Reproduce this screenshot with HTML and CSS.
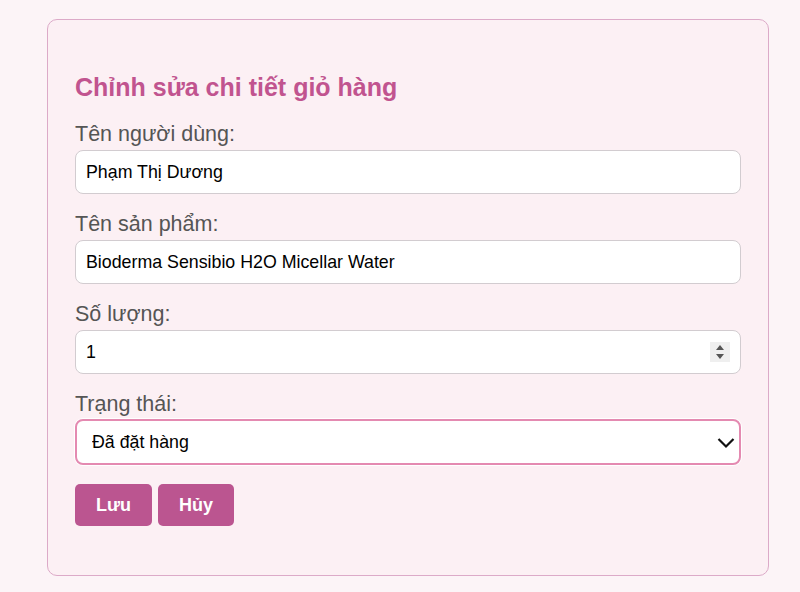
FILE: index.html
```html
<!DOCTYPE html>
<html lang="vi">
<head>
<meta charset="utf-8">
<title>Chỉnh sửa chi tiết giỏ hàng</title>
<link rel="stylesheet" href="styles.css">
</head>
<body>
<div class="card">
  <h2 class="title">Chỉnh sửa chi tiết giỏ hàng</h2>
  <form class="form">
    <label class="label" for="user">Tên người dùng:</label>
    <input class="field" id="user" type="text" value="Phạm Thị Dương">

    <label class="label" for="product">Tên sản phẩm:</label>
    <input class="field" id="product" type="text" value="Bioderma Sensibio H2O Micellar Water">

    <label class="label" for="qty">Số lượng:</label>
    <div class="wrap">
      <input class="field field-num" id="qty" type="number" value="1">
      <span class="spin">
        <svg width="20" height="20" viewBox="0 0 20 20"><path d="M10 3 L14 8 L6 8 Z M6 12 L14 12 L10 17 Z" fill="#555"/></svg>
      </span>
    </div>

    <label class="label" for="status">Trạng thái:</label>
    <div class="wrap">
      <select class="field field-select" id="status">
        <option>Đã đặt hàng</option>
      </select>
      <svg class="chev" width="18" height="12" viewBox="0 0 18 12"><path d="M1.5 2 L9 9.5 L16.5 2" fill="none" stroke="#111" stroke-width="2.2"/></svg>
    </div>

    <div class="actions">
      <button type="button" class="btn">Lưu</button>
      <button type="button" class="btn">Hủy</button>
    </div>
  </form>
</div>
</body>
</html>
```

FILE: styles.css
```css
html, body {
  margin: 0;
  padding: 0;
  background: #fcf4f7;
  font-family: "Liberation Sans", Arial, sans-serif;
}
body {
  padding: 19px 32px 16px 47px;
}
.card {
  width: 666px;
  background: #fcf0f4;
  border: 1px solid #dcaac8;
  border-radius: 10px;
  padding: 28px 27px 49px 27px;
}
.title {
  margin: 25px 0 20px 0;
  font-size: 25px;
  line-height: 29px;
  font-weight: bold;
  color: #c1548f;
}
.form {
  display: flex;
  flex-direction: column;
}
.label {
  display: block;
  font-size: 21.5px;
  line-height: 24px;
  color: #555;
  margin-bottom: 4px;
}
.field {
  box-sizing: border-box;
  width: 666px;
  height: 44px;
  margin: 0 0 18px 0;
  padding: 0 10px;
  border: 1px solid #d2ccd0;
  border-radius: 8px;
  background: #fff;
  font-family: "Liberation Sans", Arial, sans-serif;
  font-size: 17.8px;
  color: #000;
  outline: none;
}
.wrap {
  position: relative;
}
.field-num {
  -moz-appearance: textfield;
}
.field-num::-webkit-inner-spin-button,
.field-num::-webkit-outer-spin-button {
  -webkit-appearance: none;
  margin: 0;
}
.spin {
  position: absolute;
  left: 635px;
  top: 12px;
  width: 20px;
  height: 20px;
  background: #efefef;
  display: flex;
}
.field-select {
  -webkit-appearance: none;
  appearance: none;
  height: 46px;
  margin-top: -1px;
  border: 2px solid #e48ab1;
  box-shadow: 0 0 0 1px #fff;
  padding-left: 15px;
  margin-bottom: 19px;
}
.chev {
  position: absolute;
  left: 642px;
  top: 17px;
  pointer-events: none;
}
.actions {
  display: flex;
  gap: 6px;
}
.btn {
  height: 42px;
  padding: 0 21px;
  border: none;
  border-radius: 5px;
  background: #bb5590;
  color: #fff;
  font-family: "Liberation Sans", Arial, sans-serif;
  font-size: 18px;
  font-weight: bold;
}
```
